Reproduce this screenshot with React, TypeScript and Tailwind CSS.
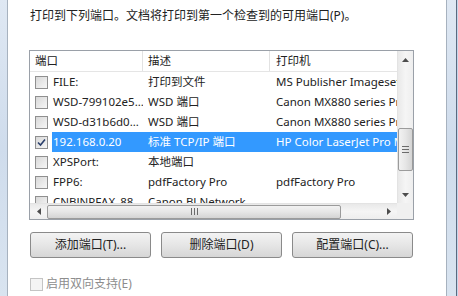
import React from "react";

const FONT = { fontFamily: '"Noto Sans", "Noto Sans CJK SC", sans-serif' };

type Row = { port: string; desc: string; printer: string; checked?: boolean; selected?: boolean };

const rows: Row[] = [
  { port: "FILE:", desc: "打印到文件", printer: "MS Publisher Imagesetter" },
  { port: "WSD-799102e5...", desc: "WSD 端口", printer: "Canon MX880 series Printer" },
  { port: "WSD-d31b6d0...", desc: "WSD 端口", printer: "Canon MX880 series Printer" },
  { port: "192.168.0.20", desc: "标准 TCP/IP 端口", printer: "HP Color LaserJet Pro MFP", checked: true, selected: true },
  { port: "XPSPort:", desc: "本地端口", printer: "" },
  { port: "FPP6:", desc: "pdfFactory Pro", printer: "pdfFactory Pro" },
  { port: "CNBJNPFAX_88...", desc: "Canon BJ Network ...", printer: "" },
];

function Check({ checked, disabled }: { checked?: boolean; disabled?: boolean }) {
  return (
    <div
      className={
        "w-[13px] h-[13px] shrink-0 border flex items-center justify-center " +
        (disabled
          ? "border-[#c4c4c4] bg-[#f4f4f4]"
          : "border-[#8f8f8f] bg-gradient-to-br from-[#d8d8d8] to-[#f6f6f6]")
      }
    >
      {checked && (
        <svg width="9" height="9" viewBox="0 0 9 9">
          <path d="M1 4.5 L3.5 7 L8 1.5" stroke="#2a3f6b" strokeWidth="1.6" fill="none" />
        </svg>
      )}
    </div>
  );
}

function Btn({ label }: { label: string }) {
  return (
    <div className="w-[121px] h-[26px] rounded-[3px] border border-[#8a8a8a] bg-gradient-to-b from-[#f3f3f3] via-[#e6e6e6] to-[#d6d6d6] flex items-center justify-center text-[12px] text-[#222]">
      {label}
    </div>
  );
}

export default function App() {
  return (
    <div className="w-[458px] h-[296px] bg-white flex overflow-hidden" style={FONT}>
      {/* left frame */}
      <div className="w-[7px] shrink-0 bg-gradient-to-b from-[#dfe8f3] via-[#cfdcec] to-[#d9e4f0]" />
      <div className="w-[1px] shrink-0 bg-[#a7b2bf]" />
      {/* content */}
      <div className="flex-1 flex flex-col pl-[21px] pt-[8px]">
        <div className="text-[12px] leading-[16px] text-[#222] pl-[1px]">
          打印到下列端口。文档将打印到第一个检查到的可用端口(P)。
        </div>
        {/* list */}
        <div className="mt-[26px] w-[385px] h-[170px] border border-[#9aa0a8] grid grid-cols-[1fr_16px] grid-rows-[1fr_16px]">
          <div className="overflow-hidden relative">
            {/* header */}
            <div className="h-[21px] flex text-[11.5px] text-[#222] border-b border-[#e5e5e5]">
              <div className="w-[113px] shrink-0 pl-[5px] flex items-center border-r border-[#e2e2e2]">端口</div>
              <div className="w-[127px] shrink-0 pl-[5px] flex items-center border-r border-[#e2e2e2]">描述</div>
              <div className="flex-1 pl-[6px] flex items-center">打印机</div>
            </div>
            {rows.map((r, i) => (
              <div key={i} className="h-[20px] flex items-center text-[11.5px] whitespace-nowrap">
                <div className="w-[113px] shrink-0 flex items-center h-full">
                  <div className="pl-[5px] pr-[4px]">
                    <Check checked={r.checked} />
                  </div>
                  <div
                    className={
                      "h-full flex-1 flex items-center pl-[1px] overflow-hidden " +
                      (r.selected ? "bg-[#3399ff] text-white" : "text-[#222]")
                    }
                  >
                    {r.port}
                  </div>
                </div>
                <div
                  className={
                    "w-[127px] shrink-0 h-full flex items-center pl-[5px] overflow-hidden " +
                    (r.selected ? "bg-[#3399ff] text-white" : "text-[#222]")
                  }
                >
                  {r.desc}
                </div>
                <div
                  className={
                    "flex-1 h-full flex items-center pl-[6px] overflow-hidden " +
                    (r.selected ? "bg-[#3399ff] text-white" : "text-[#222]")
                  }
                >
                  {r.printer}
                </div>
              </div>
            ))}
          </div>
          {/* vertical scrollbar */}
          <div className="bg-gradient-to-r from-[#e9e9e9] via-[#f5f5f5] to-[#eeeeee] border-l border-[#e3e3e3] flex flex-col items-center">
            <div className="h-[17px] flex items-center justify-center">
              <svg width="7" height="4" viewBox="0 0 7 4"><path d="M0 4 L3.5 0 L7 4Z" fill="#4d4d4d" /></svg>
            </div>
            <div className="h-[60px]" />
            <div className="w-[15px] h-[43px] rounded-[2px] border border-[#9b9b9b] bg-gradient-to-r from-[#f2f2f2] via-[#e6e6e6] to-[#d4d4d4] flex flex-col items-center justify-center gap-[2px]">
              <div className="w-[7px] h-[1px] bg-[#6b6b6b]" />
              <div className="w-[7px] h-[1px] bg-[#6b6b6b]" />
              <div className="w-[7px] h-[1px] bg-[#6b6b6b]" />
            </div>
            <div className="flex-1" />
            <div className="h-[17px] flex items-center justify-center">
              <svg width="7" height="4" viewBox="0 0 7 4"><path d="M0 0 L3.5 4 L7 0Z" fill="#4d4d4d" /></svg>
            </div>
          </div>
          {/* horizontal scrollbar */}
          <div className="bg-gradient-to-b from-[#e9e9e9] via-[#f5f5f5] to-[#eeeeee] border-t border-[#e3e3e3] flex items-center">
            <div className="w-[17px] h-full flex items-center justify-center">
              <svg width="4" height="7" viewBox="0 0 4 7"><path d="M4 0 L0 3.5 L4 7Z" fill="#4d4d4d" /></svg>
            </div>
            <div className="w-[294px] h-[14px] rounded-[2px] border border-[#9b9b9b] bg-gradient-to-b from-[#f2f2f2] via-[#e6e6e6] to-[#d4d4d4] flex items-center justify-center gap-[2px]">
              <div className="w-[1px] h-[7px] bg-[#6b6b6b]" />
              <div className="w-[1px] h-[7px] bg-[#6b6b6b]" />
              <div className="w-[1px] h-[7px] bg-[#6b6b6b]" />
            </div>
            <div className="flex-1" />
            <div className="w-[17px] h-full flex items-center justify-center">
              <svg width="4" height="7" viewBox="0 0 4 7"><path d="M0 0 L4 3.5 L0 7Z" fill="#4d4d4d" /></svg>
            </div>
          </div>
          <div className="bg-[#f0f0f0]" />
        </div>
        {/* buttons */}
        <div className="mt-[12px] flex gap-[9px] pl-[1px]">
          <Btn label="添加端口(T)..." />
          <div className="ml-[1px]"><Btn label="删除端口(D)" /></div>
          <div className="ml-[1px]"><Btn label="配置端口(C)..." /></div>
        </div>
        {/* bottom checkbox */}
        <div className="mt-[17px] flex items-center gap-[3px] text-[12px] text-[#8d8d8d] pl-[1px]">
          <Check disabled />
          <span>启用双向支持(E)</span>
        </div>
      </div>
      {/* right frame */}
      <div className="w-[1px] shrink-0 bg-[#a7b2bf]" />
      <div className="w-[9px] shrink-0 bg-gradient-to-b from-[#dfe8f3] via-[#cfdcec] to-[#d9e4f0]" />
      <div className="w-[1px] shrink-0 bg-[#5a6a80]" />
      <div className="w-[1px] shrink-0 bg-[#c7d6ea]" />
    </div>
  );
}
